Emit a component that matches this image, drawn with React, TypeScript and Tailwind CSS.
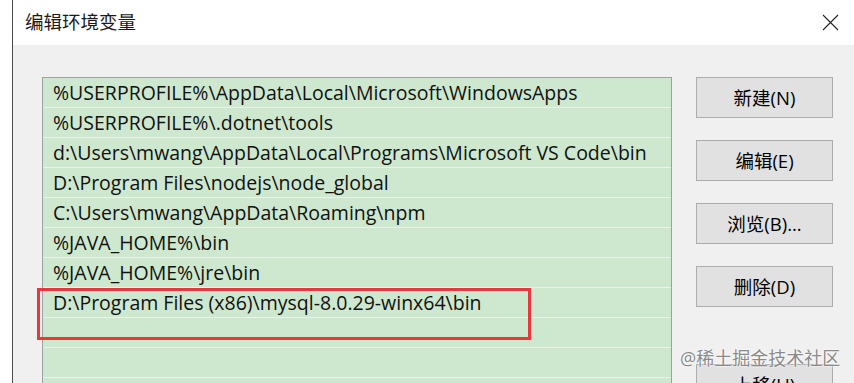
import React from 'react';

const paths = [
  '%USERPROFILE%\\AppData\\Local\\Microsoft\\WindowsApps',
  '%USERPROFILE%\\.dotnet\\tools',
  'd:\\Users\\mwang\\AppData\\Local\\Programs\\Microsoft VS Code\\bin',
  'D:\\Program Files\\nodejs\\node_global',
  'C:\\Users\\mwang\\AppData\\Roaming\\npm',
  '%JAVA_HOME%\\bin',
  '%JAVA_HOME%\\jre\\bin',
  'D:\\Program Files (x86)\\mysql-8.0.29-winx64\\bin',
  '',
  '',
  '',
];

const buttons = [
  { label: '新建(N)', mt: 'mt-0' },
  { label: '编辑(E)', mt: 'mt-[22px]' },
  { label: '浏览(B)...', mt: 'mt-[22px]' },
  { label: '删除(D)', mt: 'mt-[22px]' },
  { label: '上移(U)', mt: 'mt-[57px]' },
];

const font = { fontFamily: '"Open Sans", "Noto Sans CJK SC", sans-serif' };

export default function App() {
  return (
    <div className="relative w-[854px] h-[383px] overflow-hidden bg-white flex" style={font}>
      {/* window edge */}
      <div className="w-[12px] shrink-0 bg-white" />

      <div className="flex-1 flex flex-col border-l border-[#4a4a4a]">
        {/* Title bar */}
        <div className="h-[45px] shrink-0 bg-white flex items-center justify-between pl-[12px] pr-[15px]">
          <span className="text-[18.5px] text-[#1a1a1a] leading-none">编辑环境变量</span>
          <svg width="17" height="17" viewBox="0 0 17 17" className="text-[#222]">
            <path d="M1 1 L16 16 M16 1 L1 16" stroke="currentColor" strokeWidth="1.1" fill="none" />
          </svg>
        </div>

        {/* Body */}
        <div className="flex-1 bg-[#f0f0f0] flex pl-[29px] pt-[32px]">
          <div className="w-[630px] shrink-0 border border-[#a0a0a0] bg-[#cde8cf] self-start">
            {paths.map((p, i) => (
              <div
                key={i}
                className="h-[30px] border-b border-[#e8f4e8] pl-[10px] flex items-center text-[19.5px] text-[#111] whitespace-nowrap"
              >
                {p}
              </div>
            ))}
          </div>

          <div className="ml-[24px] w-[137px] shrink-0 flex flex-col">
            {buttons.map((b) => (
              <button
                key={b.label}
                className={`${b.mt} h-[41px] border border-[#adadad] bg-[#e1e1e1] text-[18.5px] text-black flex items-center justify-center`}
              >
                {b.label}
              </button>
            ))}
          </div>
        </div>
      </div>

      {/* Red highlight annotation */}
      <div className="absolute left-[37px] top-[288px] w-[494px] h-[52px] border-[3px] border-[#e8383d]" />

      {/* Watermark */}
      <div className="absolute left-[680px] top-[349px] text-[18px] leading-none text-[#8a8a8a] [text-shadow:0_0_2px_#fff,0_0_2px_#fff]">
        @稀土掘金技术社区
      </div>
    </div>
  );
}
